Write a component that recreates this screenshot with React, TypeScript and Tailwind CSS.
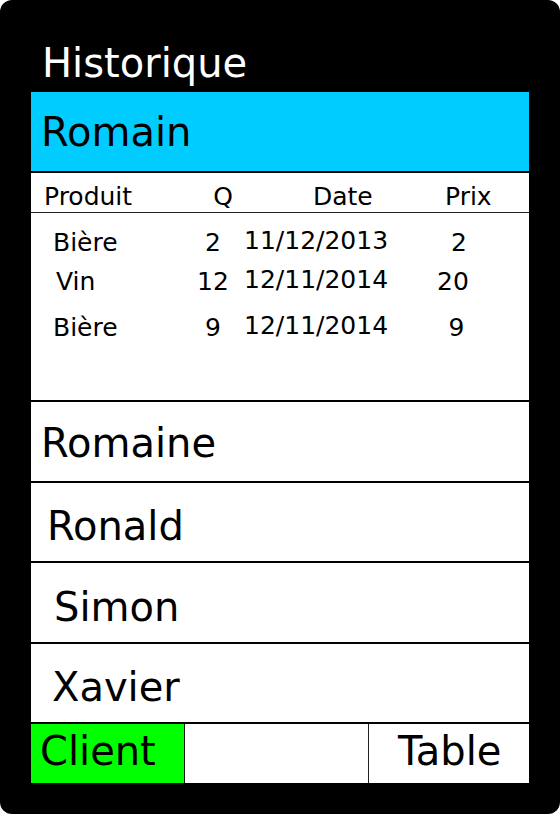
const font = { fontFamily: '"DejaVu Sans", "Liberation Sans", sans-serif' };

const lignes = [
  { produit: "Bière", pl: "pl-[22px]", q: "2", date: "11/12/2013", prix: "2", prixPl: "pl-[6px]", mt: "mt-0" },
  { produit: "Vin", pl: "pl-[25px]", q: "12", date: "12/11/2014", prix: "20", prixPl: "-ml-[3px]", mt: "mt-[14px]" },
  { produit: "Bière", pl: "pl-[22px]", q: "9", date: "12/11/2014", prix: "9", prixPl: "pl-[1px]", mt: "mt-[21px]" },
];

const clients = [
  { nom: "Romaine", h: "h-[81px]", pt: "pt-[21px]", pl: "pl-[10px]" },
  { nom: "Ronald", h: "h-[80px]", pt: "pt-[23px]", pl: "pl-[16px]" },
  { nom: "Simon", h: "h-[81px]", pt: "pt-[24px]", pl: "pl-[23px]" },
  { nom: "Xavier", h: "h-[80px]", pt: "pt-[23px]", pl: "pl-[21px]" },
];

export default function App() {
  return (
    <div className="w-[560px] h-[814px] bg-white" style={font}>
      <div className="w-[560px] h-[814px] bg-black rounded-[12px] flex flex-col">
        <div className="h-[92px] pt-[43px] pl-[42px] text-white text-[40px] leading-[40px]">
          Historique
        </div>

        <div className="ml-[31px] w-[498px] bg-white flex flex-col">
          {/* client ouvert */}
          <div className="h-[81px] bg-[#00ccff] border-b-2 border-black pt-[20px] pl-[10px] text-black text-[40px] leading-[40px]">
            Romain
          </div>

          <div className="h-[40px] border-b border-[#222] flex text-[25px] leading-[25px] text-black pt-[11px]">
            <div className="w-[162px] pl-[13px]">Produit</div>
            <div className="w-[60px] text-center">Q</div>
            <div className="w-[191px] pl-[60px]">Date</div>
            <div className="pl-[1px]">Prix</div>
          </div>

          <div className="h-[189px] border-b-2 border-black pt-[17px] text-[25px] leading-[25px] text-black">
            {lignes.map((l, i) => (
              <div key={i} className={`flex ${l.mt}`}>
                <div className={`w-[152px] ${l.pl}`}>{l.produit}</div>
                <div className="w-[60px] text-center">{l.q}</div>
                <div className="w-[183px] pl-[1px] -mt-[2px]">{l.date}</div>
                <div className={`w-[60px] text-center ${l.prixPl}`}>{l.prix}</div>
              </div>
            ))}
          </div>

          {clients.map((c) => (
            <div
              key={c.nom}
              className={`${c.h} border-b-2 border-black ${c.pt} ${c.pl} text-black text-[40px] leading-[40px]`}
            >
              {c.nom}
            </div>
          ))}

          <div className="h-[59px] flex text-black text-[40px] leading-[40px]">
            <div className="w-[154px] bg-[#00ff00] border-r border-[#111] pt-[7px] pl-[9px]">Client</div>
            <div className="w-[184px] border-r border-[#222]"></div>
            <div className="flex-1 pt-[7px] pl-[29px]">Table</div>
          </div>
        </div>
      </div>
    </div>
  );
}
